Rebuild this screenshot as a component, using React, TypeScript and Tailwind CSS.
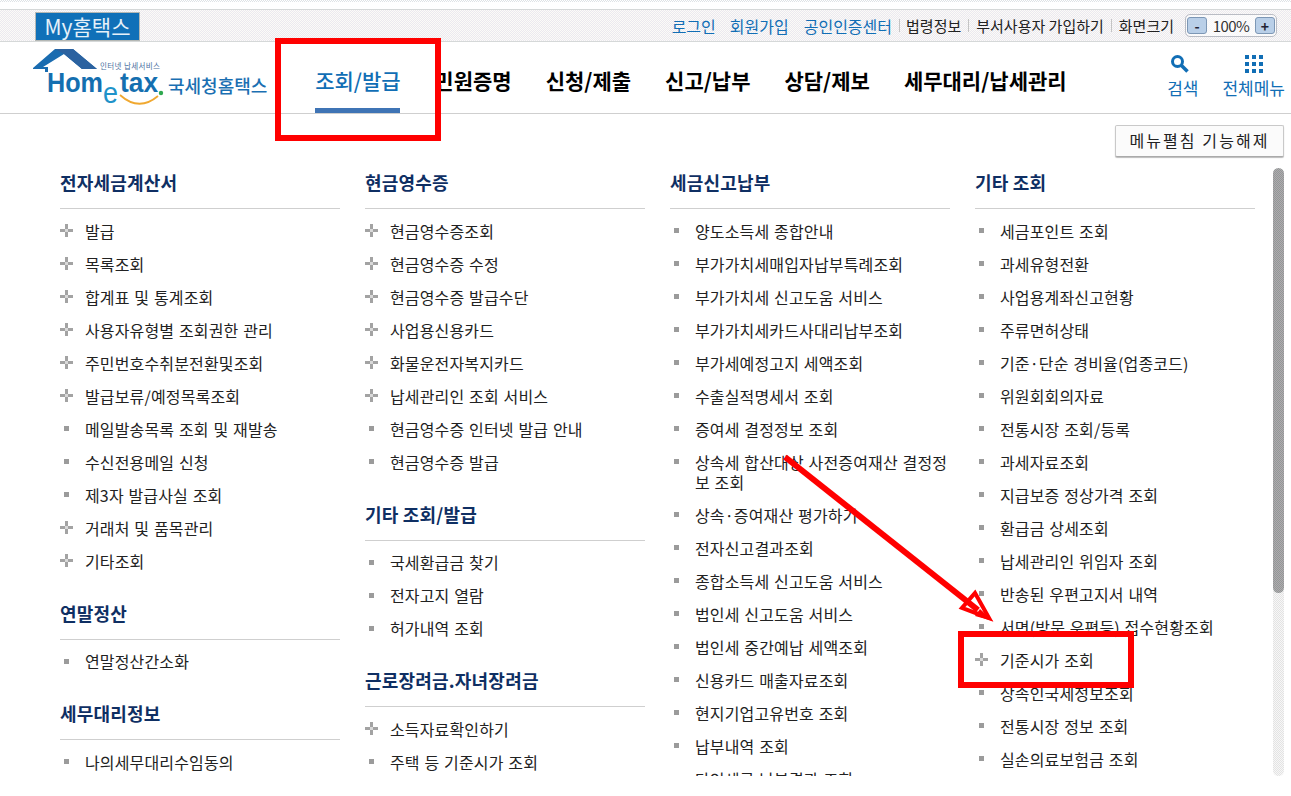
import type { ReactNode } from 'react';

type Item = { label: string; plus?: boolean };
type Section = { title: string; items: Item[] };

const p = (label: string): Item => ({ label, plus: true });
const s = (label: string): Item => ({ label });

const columns: Section[][] = [
  [
    {
      title: '전자세금계산서',
      items: [
        p('발급'), p('목록조회'), p('합계표 및 통계조회'), p('사용자유형별 조회권한 관리'),
        p('주민번호수취분전환및조회'), p('발급보류/예정목록조회'), s('메일발송목록 조회 및 재발송'),
        s('수신전용메일 신청'), s('제3자 발급사실 조회'), p('거래처 및 품목관리'), p('기타조회'),
      ],
    },
    { title: '연말정산', items: [s('연말정산간소화')] },
    { title: '세무대리정보', items: [s('나의세무대리수임동의')] },
  ],
  [
    {
      title: '현금영수증',
      items: [
        p('현금영수증조회'), p('현금영수증 수정'), p('현금영수증 발급수단'), p('사업용신용카드'),
        p('화물운전자복지카드'), p('납세관리인 조회 서비스'), s('현금영수증 인터넷 발급 안내'), s('현금영수증 발급'),
      ],
    },
    { title: '기타 조회/발급', items: [s('국세환급금 찾기'), s('전자고지 열람'), s('허가내역 조회')] },
    { title: '근로장려금.자녀장려금', items: [p('소득자료확인하기'), s('주택 등 기준시가 조회')] },
  ],
  [
    {
      title: '세금신고납부',
      items: [
        s('양도소득세 종합안내'), s('부가가치세매입자납부특례조회'), s('부가가치세 신고도움 서비스'),
        s('부가가치세카드사대리납부조회'), s('부가세예정고지 세액조회'), s('수출실적명세서 조회'),
        s('증여세 결정정보 조회'), s('상속세 합산대상 사전증여재산 결정정보 조회'), s('상속·증여재산 평가하기'),
        s('전자신고결과조회'), s('종합소득세 신고도움 서비스'), s('법인세 신고도움 서비스'),
        s('법인세 중간예납 세액조회'), s('신용카드 매출자료조회'), s('현지기업고유번호 조회'),
        s('납부내역 조회'), s('타인세금 납부결과 조회'),
      ],
    },
  ],
  [
    {
      title: '기타 조회',
      items: [
        s('세금포인트 조회'), s('과세유형전환'), s('사업용계좌신고현황'), s('주류면허상태'),
        s('기준·단순 경비율(업종코드)'), s('위원회회의자료'), s('전통시장 조회/등록'), s('과세자료조회'),
        s('지급보증 정상가격 조회'), s('환급금 상세조회'), s('납세관리인 위임자 조회'), s('반송된 우편고지서 내역'),
        s('서면(방문,우편등) 접수현황조회'), p('기준시가 조회'), s('상속인국세정보조회'), s('전통시장 정보 조회'),
        s('실손의료보험금 조회'),
      ],
    },
  ],
];

const navItems = ['민원증명', '신청/제출', '신고/납부', '상담/제보', '세무대리/납세관리'];

function Logo() {
  return (
    <svg width="140" height="66" viewBox="0 0 140 66" className="shrink-0">
      <path d="M3 23L25 4H43L67 24H52L34 9L13 22H18V27H15V24H3Z" fill="#1a6cb0" />
      <path d="M25 4H43L67 24H52L34 9Z" fill="#2b62a0" />
      <text x="70" y="24" fontSize="7.5" textLength="60" fill="#4b6fa0" fontFamily="'Noto Sans CJK KR', sans-serif">인터넷 납세서비스</text>
      <text x="17" y="47" fontSize="28" fontWeight="700" textLength="56" lengthAdjust="spacingAndGlyphs" fill="#146fb0" fontFamily="'Liberation Sans', sans-serif">Hom</text>
      <text x="73" y="58" fontSize="30" textLength="15" lengthAdjust="spacingAndGlyphs" fill="#1f93c9" fontFamily="'Liberation Sans', sans-serif">e</text>
      <text x="90" y="47" fontSize="28" fontWeight="700" textLength="38" lengthAdjust="spacingAndGlyphs" fill="#146fb0" fontFamily="'Liberation Sans', sans-serif">tax</text>
      <circle cx="131" cy="48" r="2.2" fill="#2fa84f" />
      <path d="M90 50Q109 67 128 51" fill="none" stroke="#f0a830" strokeWidth="1.8" />
    </svg>
  );
}

function SearchIcon() {
  return (
    <svg width="18" height="18" viewBox="0 0 18 18" fill="none" stroke="currentColor">
      <circle cx="6.5" cy="6.5" r="5" strokeWidth="3" />
      <path d="M10.5 10.5L16.5 16.5" strokeWidth="3.6" />
    </svg>
  );
}

function GridIcon() {
  return (
    <svg width="18" height="18" viewBox="0 0 18 18" fill="currentColor">
      {[0, 7, 14].map((y) =>
        [0, 7, 14].map((x) => <rect key={`${x}-${y}`} x={x} y={y} width="4" height="4" />)
      )}
    </svg>
  );
}

function ZoomButton({ children }: { children: ReactNode }) {
  return (
    <span className="flex h-[17px] w-[20px] items-center justify-center rounded-[3px] border border-[#7d97b5] bg-[#b9cfe8] text-[14px] leading-none font-bold text-[#223]">
      {children}
    </span>
  );
}

function Bullet({ plus }: { plus?: boolean }) {
  if (plus) {
    return (
      <svg width="13" height="13" viewBox="0 0 13 13" className="shrink-0" fill="#a3a3a3">
        <rect x="5" y="0" width="3" height="13" />
        <rect x="0" y="5" width="13" height="3" />
        <rect x="5" y="5" width="3" height="3" fill="#d9d9d9" />
      </svg>
    );
  }
  return (
    <span className="flex w-[13px] shrink-0 justify-center">
      <span className="h-[5px] w-[5px] bg-[#9b9b9b]" />
    </span>
  );
}

function MenuSection({ section }: { section: Section }) {
  return (
    <section className="mb-[21.5px]">
      <h3 className="h-[41px] border-b border-[#cfcfcf] text-[18px] leading-[28px] font-bold tracking-[0.2px] text-[#0f2f63]">
        {section.title}
      </h3>
      <ul className="mt-[5px]">
        {section.items.map((item) => (
          <li key={item.label} className="flex py-[6.5px] text-[16px] leading-[20px] tracking-[0.15px] [word-spacing:1px] text-[#222]">
            <span className="flex h-[20px] w-[25px] shrink-0 items-center">
              <Bullet plus={item.plus} />
            </span>
            <span className="break-all">{item.label}</span>
          </li>
        ))}
      </ul>
    </section>
  );
}

export default function App() {
  return (
    <div className="relative h-[796px] w-[1291px] overflow-hidden bg-white font-['Noto_Sans_CJK_KR','Liberation_Sans',sans-serif]">
      <div className="h-[2px] bg-[repeating-conic-gradient(#dfe3e6_0_25%,#ffffff_0_50%)] bg-[length:2px_2px]" />
      <div className="h-[7px]" />

      <div className="flex h-[33px] items-center border-y border-[#d5d8d8] bg-[repeating-conic-gradient(#ebe8f0_0_25%,#fbfbf7_0_50%)] bg-[length:2px_2px] pr-[14px] pl-[35px]">
        <div className="flex h-[29px] w-[105px] items-center justify-center self-end border border-[#b5b8b5] bg-[#1070b8] text-[21px] leading-none text-[#e6f1f9]">
          My홈택스
        </div>
        <div className="ml-auto flex items-center text-[15px] leading-none text-[#222]">
          <span className="mr-[14px] text-[16px] text-[#116eb5]">로그인</span>
          <span className="mr-[15px] text-[16px] text-[#116eb5]">회원가입</span>
          <span className="text-[16px] text-[#116eb5]">공인인증센터</span>
          <span className="mx-[6.5px] h-[13px] w-px bg-[#c4c4c4]" />
          <span>법령정보</span>
          <span className="mx-[7px] h-[13px] w-px bg-[#c4c4c4]" />
          <span>부서사용자 가입하기</span>
          <span className="mx-[7px] h-[13px] w-px bg-[#c4c4c4]" />
          <span>화면크기</span>
          <div className="ml-[11px] flex h-[23px] w-[92px] items-center justify-between rounded-[5px] border border-[#b9bcc4] bg-white/60 px-[1px]">
            <ZoomButton>-</ZoomButton>
            <span className="text-[15px] tracking-[-0.6px] text-[#333]">100%</span>
            <ZoomButton>+</ZoomButton>
          </div>
        </div>
      </div>

      <header className="flex h-[72px] items-stretch border-b border-[#cfcfcf] pr-[6px] pl-[30px]">
        <div className="flex items-start pt-[3px]">
          <Logo />
          <span className="mt-[29px] -ml-[2px] text-[18px] leading-[22px] font-medium whitespace-nowrap text-[#1b6fb2]">
            국세청홈택스
          </span>
        </div>
        <nav className="ml-[48px] flex text-[21px] leading-none whitespace-nowrap text-black">
          <a className="flex w-[85px] items-center justify-center border-b-[5px] border-[#3f74b5] pt-[10px] font-medium text-[#116eb5]">조회/발급</a>
          {navItems.map((item) => (
            <a key={item} className="ml-[34px] flex items-center pt-[7px] pb-[1px] font-bold">{item}</a>
          ))}
        </nav>
        <div className="ml-auto flex gap-[24px] pt-[13px] text-[17px] leading-[22px] text-[#116eb5]">
          <div className="flex flex-col items-center">
            <span className="mr-[5px] mb-[4px]"><SearchIcon /></span>
            <span>검색</span>
          </div>
          <div className="flex flex-col items-center">
            <span className="mb-[4px]"><GridIcon /></span>
            <span>전체메뉴</span>
          </div>
        </div>
      </header>

      <div className="flex h-[54px] items-start justify-end pt-[11px] pr-[7px]">
        <button className="h-[32px] w-[169px] rounded-[2px] border border-[#c9c9c9] border-b-[#aaaaaa] bg-[#fbfbfb] pb-[3px] text-[16px] tracking-[2.1px] text-[#222] shadow-[0_1px_1px_#bbb]">
          메뉴펼침 기능해제
        </button>
      </div>

      <div className="flex h-[608px] overflow-hidden pr-[7px] pl-[60px]">
        <div className="grid w-[1195px] grid-cols-[280px_280px_280px_280px] gap-[25px]">
          {columns.map((col, i) => (
            <div key={i}>
              {col.map((section) => (
                <MenuSection key={section.title} section={section} />
              ))}
            </div>
          ))}
        </div>
        <div className="ml-auto h-full w-[11px] rounded-full bg-[repeating-conic-gradient(#e3e3e3_0_25%,#f7f7f7_0_50%)] bg-[length:2px_2px]">
          <div className="h-[425px] rounded-full bg-[repeating-conic-gradient(#8f9c96_0_25%,#b3a7b0_0_50%)] bg-[length:2px_2px]" />
        </div>
      </div>

      {/* annotation overlays drawn over the screenshot */}
      <div className="absolute top-[38px] left-[275px] h-[103px] w-[166px] border-[6px] border-[#ff0000]" />
      <div className="absolute top-[631px] left-[958px] h-[57px] w-[176px] border-[6px] border-[#ff0000]" />
      <svg className="pointer-events-none absolute inset-0" width="1291" height="796">
        <path d="M785 457L978 610" stroke="#ff0000" strokeWidth="6" fill="none" />
        <path d="M989 618L962 608L975 593Z" stroke="#ff0000" strokeWidth="4" fill="none" />
        <path d="M993 621L980 609L975 616Z" fill="#ff0000" />
      </svg>
    </div>
  );
}
